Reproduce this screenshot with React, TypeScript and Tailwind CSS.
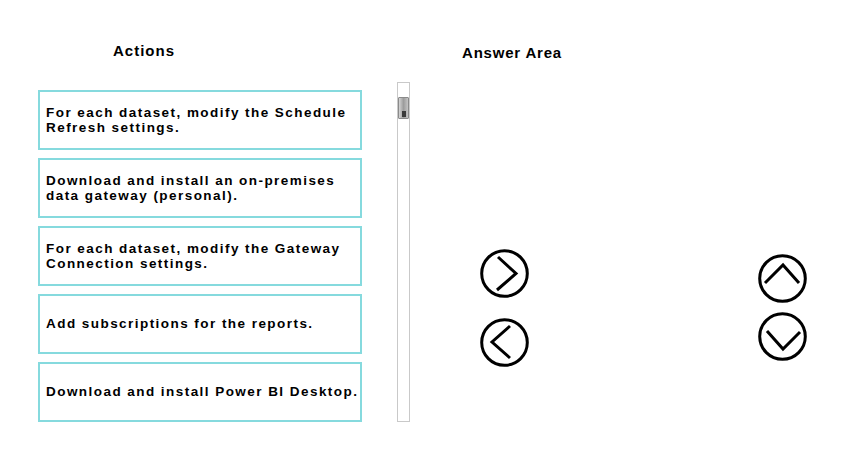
import React from "react";

const items: string[][] = [
  ["For each dataset, modify the Schedule", "Refresh settings."],
  ["Download and install an on-premises", "data gateway (personal)."],
  ["For each dataset, modify the Gateway", "Connection settings."],
  ["Add subscriptions for the reports."],
  ["Download and install Power BI Desktop."],
];

function CircleIcon({ points }: { points: string }) {
  return (
    <svg width="49" height="49" viewBox="0 0 49 49" className="block">
      <circle cx="24.5" cy="24.5" r="22.8" fill="none" stroke="#000" strokeWidth="3" />
      <polyline points={points} fill="none" stroke="#000" strokeWidth="3" strokeLinecap="butt" strokeLinejoin="miter" />
    </svg>
  );
}

export default function App() {
  return (
    <div className="w-[841px] h-[470px] bg-white flex font-['Liberation_Sans',Arial,sans-serif] text-black overflow-hidden">
      <div className="ml-[38px] w-[324px] flex flex-col shrink-0">
        <div className="pt-[42px] pl-[75px] h-[90px] text-[15px] font-bold tracking-[1px] leading-[17px]">
          Actions
        </div>
        <div className="flex flex-col gap-[8px]">
          {items.map((lines, i) => (
            <div
              key={i}
              className="h-[60px] border-2 border-[#86dade] pl-[6px] flex flex-col justify-center text-[13.5px] font-bold tracking-[1.45px] leading-[15.2px] whitespace-nowrap"
            >
              {lines.map((l, j) => (
                <div key={j}>{l}</div>
              ))}
            </div>
          ))}
        </div>
      </div>

      <div className="ml-[35px] mt-[82px] w-[13px] h-[340px] border border-[#c9c9c9] bg-white shrink-0 flex flex-col items-center">
        <div className="mt-[14px] w-[11px] h-[22px] border border-[#8a8a8a] rounded-[1px] bg-gradient-to-r from-[#d4d4d4] via-[#9c9c9c] to-[#c4c4c4] flex justify-center">
          <div className="mt-[13px] w-[4px] h-[6px] bg-[#3a3a3a]" />
        </div>
      </div>

      <div className="ml-[52px] pt-[44px] flex flex-col">
        <div className="text-[15px] font-bold tracking-[0.8px] leading-[17px] whitespace-nowrap">Answer Area</div>
        <div className="flex mt-[188px] ml-[18px]">
          <div className="flex flex-col gap-[20px]">
            <CircleIcon points="18,8 36,24.5 17,41" />
            <CircleIcon points="30,8 12,24 30,40" />
          </div>
          <div className="flex flex-col gap-[9px] ml-[229px] mt-[5px]">
            <CircleIcon points="7,29 25,11 41,29" />
            <CircleIcon points="9,19 25,37 42,20" />
          </div>
        </div>
      </div>
    </div>
  );
}
